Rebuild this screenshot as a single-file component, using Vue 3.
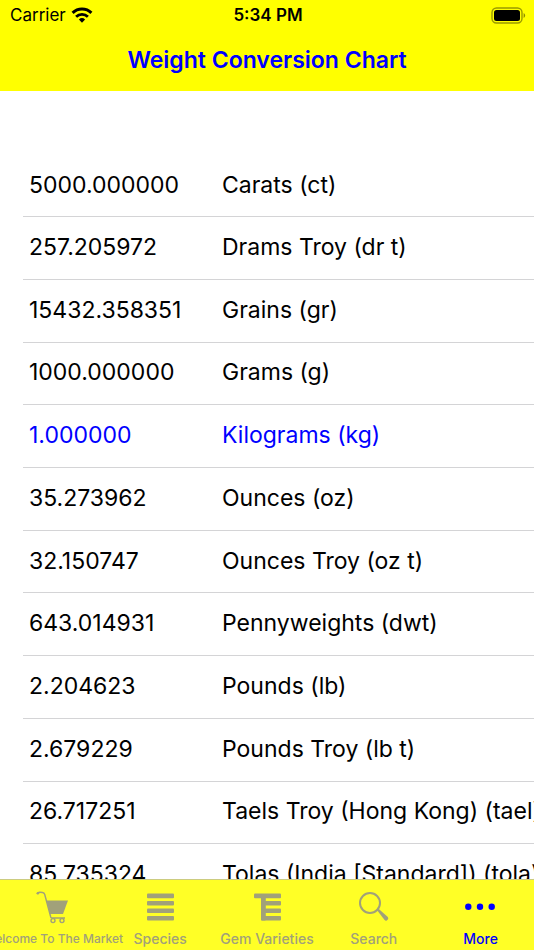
<script setup>
import { ref } from 'vue'

const active = ref('more')

const weights = [
  { value: '5000.000000', unit: 'Carats (ct)' },
  { value: '257.205972', unit: 'Drams Troy (dr t)' },
  { value: '15432.358351', unit: 'Grains (gr)' },
  { value: '1000.000000', unit: 'Grams (g)' },
  { value: '1.000000', unit: 'Kilograms (kg)', selected: true },
  { value: '35.273962', unit: 'Ounces (oz)' },
  { value: '32.150747', unit: 'Ounces Troy (oz t)' },
  { value: '643.014931', unit: 'Pennyweights (dwt)' },
  { value: '2.204623', unit: 'Pounds (lb)' },
  { value: '2.679229', unit: 'Pounds Troy (lb t)' },
  { value: '26.717251', unit: 'Taels Troy (Hong Kong) (tael)' },
  { value: '85.735324', unit: 'Tolas (India [Standard]) (tola)' },
]

const tabs = [
  { id: 'market', label: 'Welcome To The Market', long: true },
  { id: 'species', label: 'Species' },
  { id: 'gems', label: 'Gem Varieties' },
  { id: 'search', label: 'Search' },
  { id: 'more', label: 'More' },
]
</script>

<template>
  <div class="app">
    <header class="header">
      <div class="status">
        <div class="carrier">
          <span>Carrier</span>
          <svg class="wifi" viewBox="0 0 22 16">
            <path d="M1.6 5.9a13.4 13.4 0 0 1 18.8 0" fill="none" stroke="#000" stroke-width="3" />
            <path d="M5.1 9.7a8.4 8.4 0 0 1 11.8 0" fill="none" stroke="#000" stroke-width="2.8" />
            <path d="M11 15.7l-3.1-3.2a4.6 4.6 0 0 1 6.2 0z" />
          </svg>
        </div>
        <time class="clock">5:34 PM</time>
        <svg class="battery" viewBox="0 0 35 17">
          <rect x="1" y="1" width="30" height="15" rx="4.5" fill="none" stroke="#000" stroke-opacity="0.4" stroke-width="1.4" />
          <rect x="3" y="3" width="26" height="11" rx="2.5" />
          <path d="M32.6 6v5q1.5-.8 1.5-2.5t-1.5-2.5z" fill-opacity="0.45" />
        </svg>
      </div>
      <h1 class="title">Weight Conversion Chart</h1>
    </header>

    <main class="content">
      <table class="weights" aria-label="Weight Conversion Chart">
        <tbody>
          <tr v-for="w in weights" :key="w.unit" :class="{ selected: w.selected }">
            <td class="value">{{ w.value }}</td>
            <td class="unit">{{ w.unit }}</td>
          </tr>
        </tbody>
      </table>
    </main>

    <nav class="tabs">
      <button
        v-for="tab in tabs"
        :key="tab.id"
        type="button"
        class="tab"
        :class="{ active: active === tab.id, long: tab.long }"
        @click="active = tab.id"
      >
        <svg class="icon" viewBox="0 0 36 36" fill="currentColor">
          <g v-if="tab.id === 'market'">
            <path d="M2 4q1-2 3-1.8l2.5.2q1.7.2 2.2 2l6 22.5q.4 1.2 2 1.2H30" fill="none" stroke="currentColor" stroke-width="1.5" />
            <circle cx="2.9" cy="3.3" r="1.3" />
            <path d="M11.5 10.5H33l-5 13.5H15.1z" />
            <circle cx="18" cy="30.6" r="2" fill="none" stroke="currentColor" stroke-width="1.4" />
            <circle cx="27" cy="30.6" r="2" fill="none" stroke="currentColor" stroke-width="1.4" />
          </g>
          <g v-else-if="tab.id === 'species'">
            <rect x="5" y="3.5" width="27" height="4.8" rx="1" />
            <rect x="5" y="11" width="27" height="4.4" rx="1" />
            <rect x="5" y="18.4" width="27" height="4.6" rx="1" />
            <rect x="5" y="26" width="27" height="4.6" rx="1" />
          </g>
          <g v-else-if="tab.id === 'gems'">
            <rect x="5" y="3.5" width="27" height="4.8" rx="1" />
            <rect x="12" y="4" width="4.8" height="26.6" rx="1" />
            <rect x="12" y="11" width="20" height="4.4" rx="1" />
            <rect x="12" y="18.4" width="20" height="4.6" rx="1" />
            <rect x="12" y="26" width="20" height="4.6" rx="1" />
          </g>
          <g v-else-if="tab.id === 'search'">
            <circle cx="14" cy="13" r="10" fill="none" stroke="currentColor" stroke-width="2" />
            <path d="M20.5 19.5l1.5-1.3 9.8 8.8q1 1.2 0 2.4l-1 1q-1.1.8-2.2-.3z" />
          </g>
          <g v-else>
            <circle cx="5.3" cy="16.7" r="3.2" />
            <circle cx="17" cy="16.7" r="3.2" />
            <circle cx="28.7" cy="16.7" r="3.2" />
          </g>
        </svg>
        <span class="label">{{ tab.label }}</span>
      </button>
    </nav>
  </div>
</template>

<style>
body {
  margin: 0;
}
</style>

<style scoped>
.app {
  display: flex;
  flex-direction: column;
  height: 100vh;
  overflow: hidden;
  background: #fff;
  color: #000;
  font-family: Inter, "Liberation Sans", sans-serif;
}

.header {
  flex: none;
  height: 91px;
  background: #ffff00;
}

.status {
  display: grid;
  grid-template-columns: 1fr auto 1fr;
  align-items: center;
  height: 30px;
  padding: 0 8px 0 10px;
  font-size: 17px;
}

.carrier {
  display: flex;
  align-items: center;
  gap: 5px;
}

.wifi {
  width: 22px;
  height: 16px;
}

.clock {
  font-weight: 600;
}

.battery {
  justify-self: end;
  width: 35px;
  height: 17px;
}

.title {
  margin: 0;
  color: #0000ff;
  font-size: 23px;
  font-weight: 600;
  line-height: 60px;
  text-align: center;
}

.content {
  flex: 1;
  min-height: 0;
  overflow-x: hidden;
  overflow-y: auto;
  scrollbar-width: none;
}

.weights {
  width: calc(100% - 23px);
  height: 752px;
  margin: 64px 0 0 23px;
  border-collapse: collapse;
  table-layout: fixed;
  font-size: 23px;
  white-space: nowrap;
}

.weights td {
  padding: 0 0 2px;
  border-bottom: 1px solid #d4d4d6;
}

.weights .value {
  width: 193px;
  padding-left: 6px;
}

.selected {
  color: #0000ff;
}

.tabs {
  display: flex;
  flex: none;
  height: 70px;
  border-top: 1px solid #cccc80;
  background: #ffff26;
}

.tab {
  display: flex;
  flex: 1 1 0;
  flex-direction: column;
  align-items: center;
  min-width: 0;
  padding: 10px 0 0;
  border: 0;
  background: none;
  color: #a1a17a;
  font-family: inherit;
  font-size: 14px;
  font-weight: 500;
  cursor: pointer;
}

.tab.active {
  color: #0000ff;
}

.icon {
  flex: none;
  width: 36px;
  height: 36px;
}

.label {
  line-height: 18px;
  margin-top: 4px;
  white-space: nowrap;
}

.long .label {
  font-size: 12px;
}
</style>
